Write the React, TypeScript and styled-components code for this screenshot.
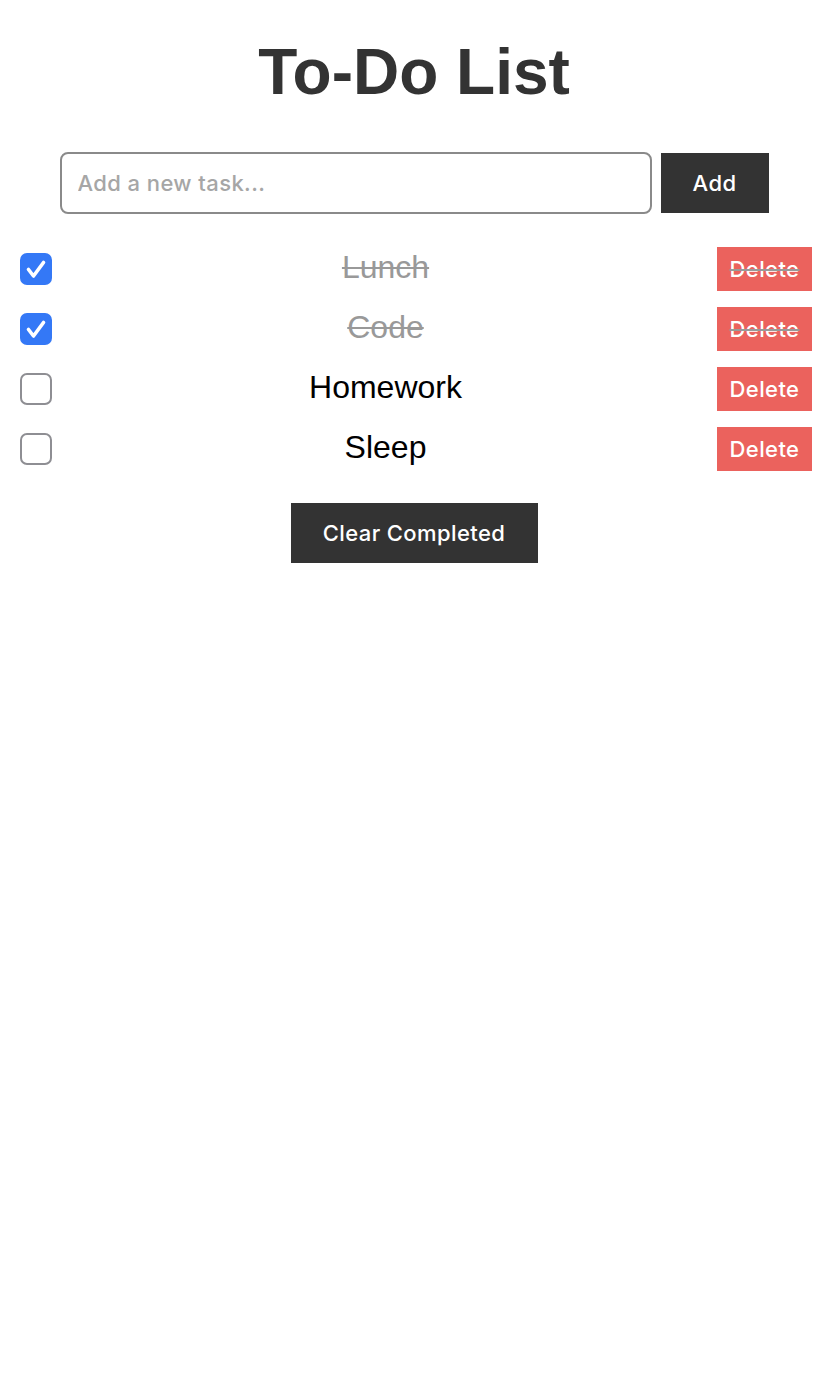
import React, { useState } from "react";
import styled, { createGlobalStyle } from "styled-components";

const GlobalStyle = createGlobalStyle`
  html, body {
    margin: 0;
    padding: 0;
    background: #ffffff;
  }
  body {
    font-family: "Liberation Sans", Arial, sans-serif;
  }
  * { box-sizing: border-box; }
`;

const Page = styled.div`
  width: 828px;
  padding-top: 35px;
  display: flex;
  flex-direction: column;
  align-items: center;
`;

const Title = styled.h1`
  margin: 0 0 43px;
  font-family: "Liberation Sans", Arial, sans-serif;
  font-weight: 700;
  font-size: 64px;
  line-height: 74px;
  color: #333333;
`;

const AddRow = styled.form`
  display: flex;
  align-items: center;
  gap: 9px;
  width: 709px;
  margin: 0 0 33px;
`;

const TaskInput = styled.input`
  width: 592px;
  height: 62px;
  padding: 0 16px;
  border: 2px solid #8a8a8a;
  border-radius: 8px;
  font-family: Inter, "Noto Sans", sans-serif;
  font-size: 22px;
  font-weight: 500;
  letter-spacing: 0.4px;
  color: #222;
  outline: none;
  &::placeholder {
    color: #a6a6a6;
  }
`;

const DarkButton = styled.button<{ $width: number }>`
  width: ${(p) => p.$width}px;
  height: 60px;
  border: none;
  border-radius: 0;
  background: #333333;
  color: #ffffff;
  font-family: Inter, "Noto Sans", sans-serif;
  font-size: 22px;
  font-weight: 500;
  letter-spacing: 0.4px;
  cursor: pointer;
  padding: 0;
`;

const List = styled.ul`
  list-style: none;
  margin: 0 0 32px;
  padding: 0;
  width: 100%;
  display: flex;
  flex-direction: column;
  gap: 16px;
`;

const Row = styled.li`
  display: flex;
  align-items: center;
  height: 44px;
  padding: 0 16px 0 20px;
`;

const CheckBox = styled.span<{ $checked: boolean }>`
  flex: 0 0 auto;
  width: 32px;
  height: 32px;
  border-radius: 7px;
  display: flex;
  align-items: center;
  justify-content: center;
  cursor: pointer;
  background: ${(p) => (p.$checked ? "#3478f6" : "#ffffff")};
  border: ${(p) => (p.$checked ? "none" : "2px solid #8e8e93")};
`;

const TaskText = styled.span<{ $done: boolean }>`
  flex: 1;
  text-align: center;
  padding: 0 0 4px 2px;
  font-family: "Liberation Sans", Arial, sans-serif;
  font-size: 32px;
  line-height: 40px;
  color: ${(p) => (p.$done ? "#999999" : "#000000")};
  text-decoration: ${(p) => (p.$done ? "line-through" : "none")};
  text-decoration-thickness: 2px;
`;

const DeleteButton = styled.button<{ $done: boolean }>`
  flex: 0 0 auto;
  width: 95px;
  height: 44px;
  border: none;
  border-radius: 0;
  padding: 0;
  background: #eb625d;
  color: #ffffff;
  font-family: Inter, "Noto Sans", sans-serif;
  font-size: 22px;
  font-weight: 500;
  letter-spacing: 0.4px;
  cursor: pointer;
  text-decoration: ${(p) => (p.$done ? "line-through" : "none")};
  text-decoration-color: #999999;
  text-decoration-thickness: 2px;
`;

type Task = { id: number; text: string; done: boolean };

const initial: Task[] = [
  { id: 1, text: "Lunch", done: true },
  { id: 2, text: "Code", done: true },
  { id: 3, text: "Homework", done: false },
  { id: 4, text: "Sleep", done: false },
];

const Check = () => (
  <svg width="32" height="32" viewBox="0 0 32 32" aria-hidden="true">
    <path
      d="M8.5 16.5 L13.5 23 L23.5 9.5"
      fill="none"
      stroke="#ffffff"
      strokeWidth="3.6"
      strokeLinecap="round"
      strokeLinejoin="round"
    />
  </svg>
);

export default function App() {
  const [tasks, setTasks] = useState<Task[]>(initial);
  const [value, setValue] = useState("");

  const add = (e: React.FormEvent) => {
    e.preventDefault();
    if (!value.trim()) return;
    setTasks((t) => [...t, { id: Date.now(), text: value.trim(), done: false }]);
    setValue("");
  };

  return (
    <>
      <GlobalStyle />
      <Page>
        <Title>To-Do List</Title>
        <AddRow onSubmit={add}>
          <TaskInput
            placeholder="Add a new task..."
            value={value}
            onChange={(e) => setValue(e.target.value)}
          />
          <DarkButton type="submit" $width={108}>
            Add
          </DarkButton>
        </AddRow>
        <List>
          {tasks.map((t) => (
            <Row key={t.id}>
              <CheckBox
                role="checkbox"
                aria-checked={t.done}
                $checked={t.done}
                onClick={() =>
                  setTasks((all) =>
                    all.map((x) => (x.id === t.id ? { ...x, done: !x.done } : x))
                  )
                }
              >
                {t.done && <Check />}
              </CheckBox>
              <TaskText $done={t.done}>{t.text}</TaskText>
              <DeleteButton
                $done={t.done}
                onClick={() => setTasks((all) => all.filter((x) => x.id !== t.id))}
              >
                Delete
              </DeleteButton>
            </Row>
          ))}
        </List>
        <DarkButton
          $width={247}
          onClick={() => setTasks((all) => all.filter((x) => !x.done))}
        >
          Clear Completed
        </DarkButton>
      </Page>
    </>
  );
}
